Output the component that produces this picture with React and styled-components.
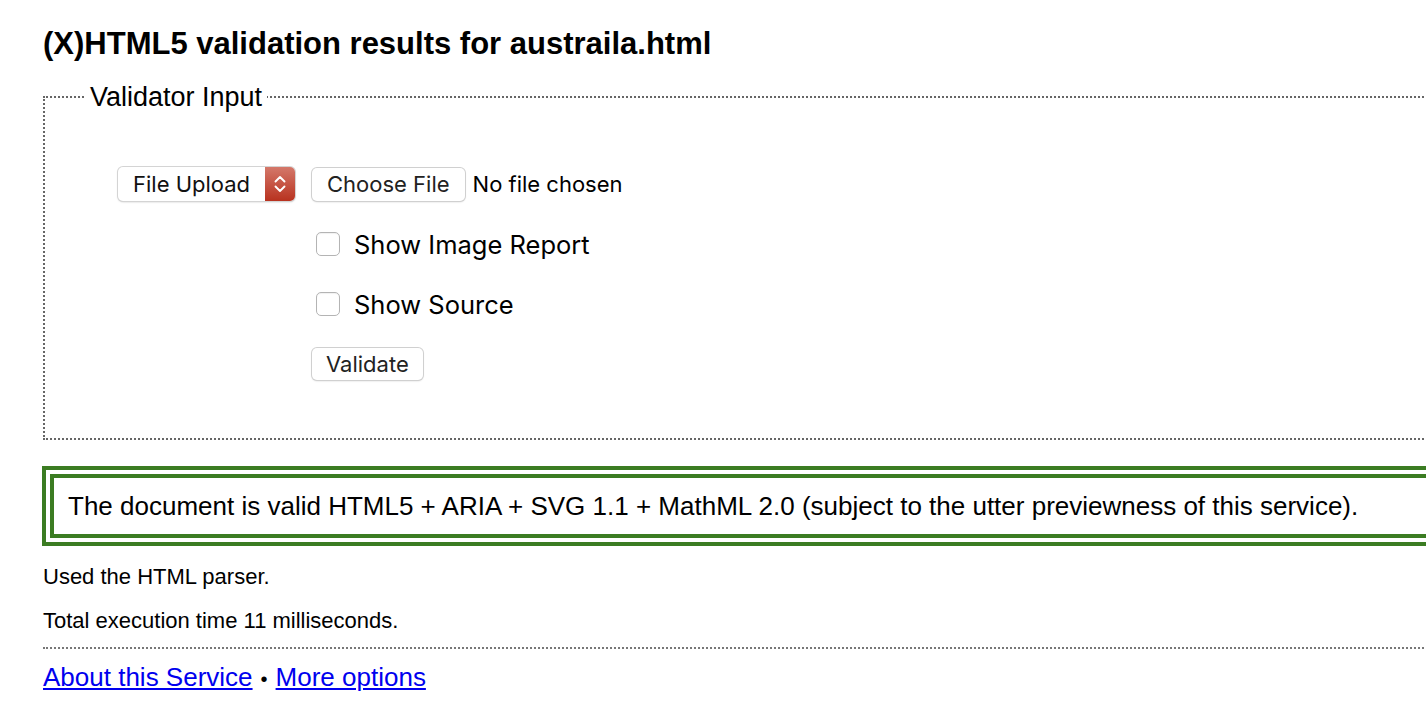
import React from 'react'
import styled, { createGlobalStyle } from 'styled-components'

const Global = createGlobalStyle`
  html, body {
    margin: 0;
    padding: 0;
    background: #fff;
    overflow: hidden;
  }
  body {
    font-family: "Liberation Sans", Arial, Helvetica, sans-serif;
    color: #000;
  }
`

function Chevrons() {
    return (
        <svg width="14" height="22" viewBox="0 0 14 22" fill="none">
            <path d="M2.5 8.5 L7 4 L11.5 8.5" stroke="#fff" strokeWidth="1.9" strokeLinecap="round" strokeLinejoin="round" />
            <path d="M2.5 13.5 L7 18 L11.5 13.5" stroke="#fff" strokeWidth="1.9" strokeLinecap="round" strokeLinejoin="round" />
        </svg>
    )
}

function App() {
    return (
        <>
            <Global />
            <Page>
                <Title>(X)HTML5 validation results for austraila.html</Title>

                <Fieldset>
                    <Legend>Validator Input</Legend>
                    <FormGrid>
                        <Select>
                            <SelectLabel>File Upload</SelectLabel>
                            <SelectArrow>
                                <Chevrons />
                            </SelectArrow>
                        </Select>
                        <Column>
                            <Row>
                                <Button>Choose File</Button>
                                <ControlText>No file chosen</ControlText>
                            </Row>
                            <Row>
                                <Checkbox />
                                <CheckLabel>Show Image Report</CheckLabel>
                            </Row>
                            <Row>
                                <Checkbox />
                                <CheckLabel>Show Source</CheckLabel>
                            </Row>
                            <Row>
                                <Button small>Validate</Button>
                            </Row>
                        </Column>
                    </FormGrid>
                </Fieldset>

                <Success>
                    The document is valid HTML5 + ARIA + SVG 1.1 + MathML 2.0 (subject to the utter previewness of this service).
                </Success>

                <Note>Used the HTML parser.</Note>
                <Note>Total execution time 11 milliseconds.</Note>

                <Footer>
                    <Link href="#">About this Service</Link>
                    <Dot>•</Dot>
                    <Link href="#">More options</Link>
                </Footer>
            </Page>
        </>
    )
}

export default App

const Page = styled.div`
  width: 1480px;
  padding: 27px 0 0 43px;
  box-sizing: border-box;
`

const Title = styled.h2`
  margin: 0;
  font-size: 31px;
  line-height: 34px;
  font-weight: 700;
`

const Fieldset = styled.fieldset`
  margin: 21px 0 0 0;
  padding: 0 0 57px 73px;
  border: 2px dotted #666;
  min-width: 0;
`

const Legend = styled.legend`
  margin-left: -33px;
  padding: 0 5px;
  font-size: 27px;
  line-height: 30px;
`

const FormGrid = styled.div`
  display: grid;
  grid-template-columns: 177px auto;
  column-gap: 16px;
  align-items: start;
  margin-top: 55px;
`

const Select = styled.div`
  display: flex;
  height: 34px;
  border-radius: 5px;
  background: #fff;
  box-shadow: 0 0 0 1px #d4d4d4, 0 1px 2px rgba(0, 0, 0, 0.25);
  overflow: hidden;
`

const SelectLabel = styled.span`
  flex: 1;
  display: flex;
  align-items: center;
  padding-left: 15px;
  font-family: Inter, "Liberation Sans", sans-serif;
  font-size: 22px;
  color: #111;
`

const SelectArrow = styled.span`
  width: 30px;
  display: flex;
  align-items: center;
  justify-content: center;
  background: linear-gradient(#d4786a, #b8321f);
`

const Column = styled.div`
  display: flex;
  flex-direction: column;
  gap: 26px;
`

const Row = styled.div`
  display: flex;
  align-items: center;
  height: 34px;
`

const Button = styled.span`
  display: inline-flex;
  align-items: center;
  height: ${p => (p.small ? '32px' : '33px')};
  padding: 0 ${p => (p.small ? '14px' : '15px')};
  margin-left: 1px;
  border-radius: 5px;
  background: #fff;
  box-shadow: 0 0 0 1px #d0d0d0, 0 1px 2px rgba(0, 0, 0, 0.2);
  font-family: Inter, "Liberation Sans", sans-serif;
  font-size: 22px;
  color: #222;
  box-sizing: border-box;
`

const ControlText = styled.span`
  margin-left: 8px;
  font-family: Inter, "Liberation Sans", sans-serif;
  font-size: 22px;
  color: #000;
`

const Checkbox = styled.span`
  width: 22px;
  height: 22px;
  margin-left: 5px;
  border: 1px solid #b4b4b4;
  border-radius: 5px;
  background: #fff;
  box-shadow: inset 0 1px 1px rgba(0, 0, 0, 0.06);
`

const CheckLabel = styled.span`
  margin-left: 14px;
  font-family: Inter, "Liberation Sans", sans-serif;
  font-size: 25.5px;
`

const Success = styled.p`
  margin: 26px 0 0 -1px;
  padding: 14px 14px;
  border: 12px double #3b7c22;
  font-size: 26px;
  line-height: 28px;
`

const Note = styled.p`
  margin: 19px 0 0 0;
  font-size: 22px;
  line-height: 24px;
  & + & {
    margin-top: 20px;
  }
`

const Footer = styled.div`
  margin-top: 14px;
  padding-top: 13px;
  border-top: 2px dotted #777;
  font-size: 26px;
  line-height: 30px;
`

const Link = styled.a`
  color: #0000ee;
  text-decoration: underline;
`

const Dot = styled.span`
  margin: 0 8px;
  font-size: 20px;
`
